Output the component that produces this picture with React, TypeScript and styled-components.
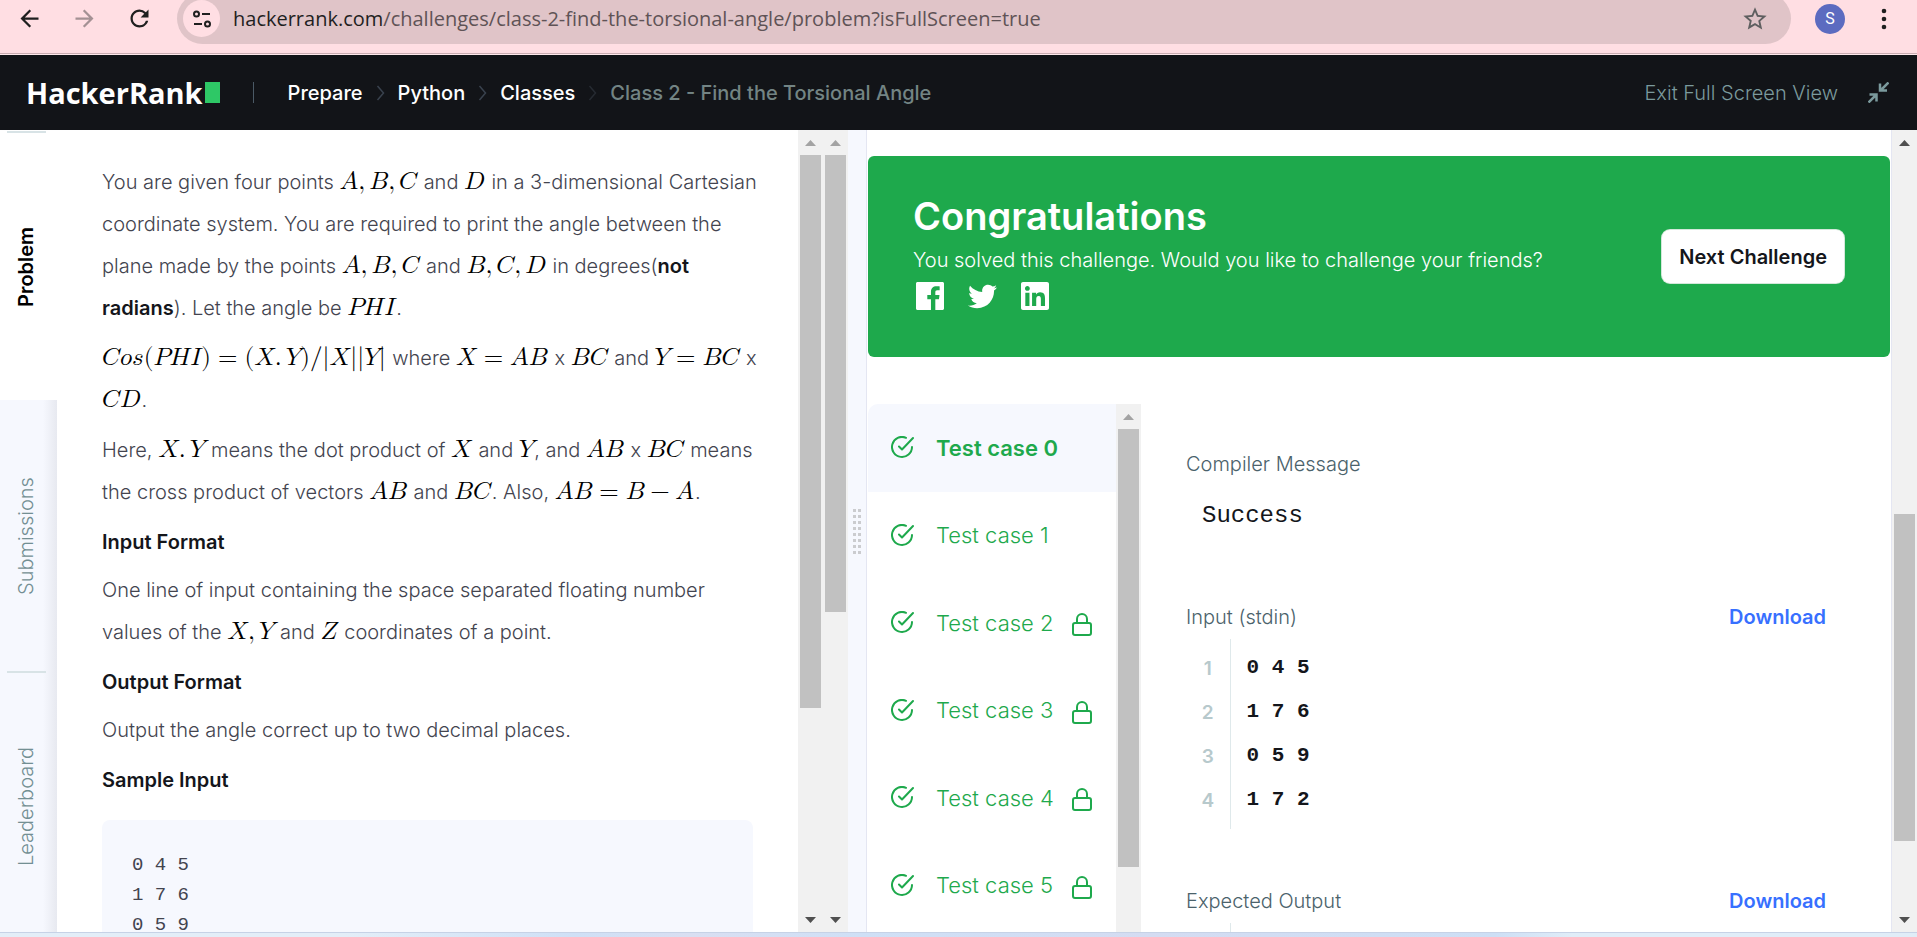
import React from "react";
import styled, { createGlobalStyle } from "styled-components";
import { MdArrowBack, MdArrowForward, MdRefresh, MdStarBorder } from "react-icons/md";
import { FaTwitter, FaLinkedin } from "react-icons/fa";

const sans = `Inter, "Liberation Sans", sans-serif`;
const mono = `"Liberation Mono", monospace`;
const ink = "#14161b";
const bodyText = "#43444f";
const green = "#1ea94c";
const pale = "#f6f8fe";

const GlobalStyle = createGlobalStyle`
  *, *::before, *::after { box-sizing: border-box; }
  body { margin: 0; background: #fff; font-family: ${sans}; font-size: 20px; }
  h1, h2, h3, p, pre, ul { margin: 0; padding: 0; }
  ul { list-style: none; }
  button { border: 0; padding: 0; background: none; font: inherit; color: inherit; cursor: pointer; }
  a { color: inherit; text-decoration: none; }
  svg { display: block; flex: none; }
`;

const Page = styled.div`
  display: flex;
  flex-direction: column;
  height: 100vh;
  overflow: hidden;
`;

/* Browser toolbar */
const BrowserBar = styled.div`
  display: flex;
  align-items: center;
  flex: none;
  height: 55px;
  padding: 0 20px 17px 16px;
  background: #ffdee3;
  border-bottom: 1px solid #ffe9ec;
  box-shadow: inset 0 -1px 0 #c9adb2;
  color: #1f1f1f;
`;

const ToolButton = styled.button<{ $faded?: boolean }>`
  display: flex;
  align-items: center;
  justify-content: center;
  width: 27px;
  height: 27px;
  margin-right: 28px;
  opacity: ${(p) => (p.$faded ? 0.4 : 1)};
`;

const AddressPill = styled.div`
  display: flex;
  align-items: center;
  flex: 1;
  min-width: 0;
  height: 51px;
  margin: 0 24px 0 -4px;
  padding: 0 22px 0 6px;
  border-radius: 26px;
  background: #e0c4c8;
`;

const SiteInfo = styled.button`
  display: flex;
  align-items: center;
  justify-content: center;
  flex: none;
  width: 37px;
  height: 37px;
  border-radius: 50%;
  background: #ffdee3;
`;

const Address = styled.div`
  flex: 1;
  min-width: 0;
  margin-left: 13px;
  overflow: hidden;
  white-space: nowrap;
  font: 400 20px/30px "Open Sans", sans-serif;
  color: #5f5356;
`;

const Host = styled.span`
  color: #1f1f1f;
`;

const StarButton = styled.button`
  color: #5f5f60;
`;

const Avatar = styled.button`
  display: flex;
  align-items: center;
  justify-content: center;
  width: 30px;
  height: 30px;
  border-radius: 50%;
  background: #5c6bc0;
  color: #fff;
  font: 400 16px/20px Roboto, sans-serif;
`;

const MenuButton = styled.button`
  width: 26px;
  height: 26px;
  margin-left: 26px;
`;

/* Site header */
const Header = styled.header`
  display: flex;
  align-items: center;
  flex: none;
  height: 75px;
  padding: 0 28px 0 26px;
  background: #121418;
`;

const Logo = styled.a`
  display: flex;
  align-items: center;
  gap: 2px;
  color: #fff;
  font: 700 29px/40px "Open Sans", sans-serif;

  &::after {
    content: "";
    width: 15px;
    height: 21px;
    background: #2ec866;
  }
`;

const Divider = styled.span`
  width: 1px;
  height: 21px;
  margin: 0 34px 0 33px;
  background: #4b5a66;
`;

const Crumbs = styled.nav`
  display: flex;
  align-items: center;
  gap: 13px;
  flex: 1;
  font-weight: 500;
  line-height: 30px;
  color: #fff;
  white-space: nowrap;

  svg { color: #39424e; }
  svg:last-of-type { color: #262b32; }
`;

const Current = styled.span`
  color: #738484;
`;

const ExitButton = styled.button`
  display: flex;
  align-items: center;
  gap: 30px;
  font-weight: 300;
  line-height: 30px;
  color: #7b9a9d;
  white-space: nowrap;
`;

/* Work area */
const Workspace = styled.main`
  display: grid;
  grid-template-columns: minmax(0, 848fr) 19px minmax(0, 1050fr);
  flex: 1;
  min-height: 0;
`;

const ProblemPane = styled.section`
  display: flex;
  min-width: 0;
  min-height: 0;
  overflow: hidden;
`;

const Rail = styled.div`
  display: flex;
  flex-direction: column;
  flex: none;
  width: 57px;
  overflow: hidden;
  background: ${pale};
`;

const RailTab = styled.button<{ $active?: boolean; $ruled?: boolean }>`
  display: flex;
  flex: none;
  flex-direction: column;
  align-items: center;
  height: 270px;
  padding-right: 5px;
  background: ${(p) =>
    p.$active ? "#fff" : `linear-gradient(to left, #e7e9f0, ${pale} 14px)`};
  color: ${(p) => (p.$active ? "#000" : "#738f93")};
  font-weight: ${(p) => (p.$active ? 600 : 300)};

  &::before {
    content: "";
    width: 39px;
    height: 2px;
    margin-top: 1px;
    background: ${(p) => (p.$ruled ? "#d8e3e6" : "transparent")};
  }
`;

const RailLabel = styled.span`
  display: flex;
  align-items: center;
  justify-content: center;
  flex: 1;
  writing-mode: vertical-rl;
  transform: rotate(180deg);
  line-height: 30px;
`;

const Statement = styled.article`
  flex: 1;
  min-width: 0;
  padding: 31px 39px 0 45px;
  overflow: hidden;
  font-weight: 300;
  line-height: 42px;
  color: ${bodyText};
`;

const Paragraph = styled.p`
  margin-bottom: 8px;

  strong { font-weight: 600; color: ${ink}; }
`;

const Heading = styled.h3`
  margin-bottom: 6px;
  font-size: 20px;
  font-weight: 600;
  line-height: 42px;
  color: ${ink};
`;

const Formula = styled("math")`
  margin-right: 1px;
  font-family: "Latin Modern Math", math, "Liberation Serif", serif;
  font-size: 25px;
  line-height: 24px;
  color: #000;
`;

const Sample = styled.pre`
  margin: 19px 6px 0 0;
  padding: 30px 30px 60px;
  border-radius: 8px;
  background: ${pale};
  color: ${bodyText};
  font: 400 19px/30px ${mono};
`;

/* Scrollbars drawn as part of the panes */
const Track = styled.div`
  display: flex;
  flex-direction: column;
  flex: none;
  width: 25px;
  background: #f1f1f1;
`;

const TrackSpace = styled.span<{ $grow: number }>`
  flex: ${(p) => p.$grow} 0 0;
`;

const Thumb = styled.span<{ $grow: number }>`
  flex: ${(p) => p.$grow} 0 0;
  margin: 0 2px;
  background: #c1c1c1;
`;

const TrackArrow = styled.span<{ $dim?: boolean }>`
  display: flex;
  align-items: center;
  justify-content: center;
  flex: none;
  height: 25px;
  padding-right: 1px;
  color: ${(p) => (p.$dim ? "#a3a3a3" : "#505050")};
`;

const Splitter = styled.div`
  display: flex;
  align-items: center;
  justify-content: center;
  background: ${pale};
  border-right: 1px solid #e4e6f2;
`;

const ResultPane = styled.section`
  display: flex;
  min-width: 0;
  min-height: 0;
  overflow: hidden;
`;

const ResultBody = styled.div`
  display: flex;
  flex-direction: column;
  flex: 1;
  min-width: 0;
  padding: 26px 1px 0;
  border-right: 1px solid #e4e6f2;
  overflow: hidden;
`;

const Banner = styled.div`
  display: flex;
  align-items: center;
  justify-content: space-between;
  flex: none;
  padding: 35px 46px 47px 45px;
  border-radius: 6px;
  background: ${green};
  color: #fff;
`;

const BannerTitle = styled.h2`
  font-size: 38px;
  font-weight: 600;
  line-height: 50px;
`;

const BannerText = styled.p`
  margin-top: 2px;
  font-weight: 300;
  line-height: 34px;
`;

const Socials = styled.div`
  display: flex;
  align-items: center;
  gap: 24px;
  height: 28px;
  margin: 5px 0 0 3px;
`;

const LinkedinIcon = styled(FaLinkedin)`
  width: 28px;
  height: 32px;
`;

const NextButton = styled.button`
  flex: none;
  height: 53px;
  padding: 0 17px;
  margin-top: 12px;
  border-radius: 8px;
  background: #fff;
  color: ${ink};
  font-weight: 600;
  box-shadow: 0 0 0 1px #d3e8da;
`;

const Results = styled.div`
  display: flex;
  flex: 1;
  min-height: 0;
  margin-top: 47px;
`;

const CaseList = styled.ul`
  display: grid;
  grid-auto-rows: 1fr;
  flex: none;
  width: 248px;
  height: 525px;
  border-top-left-radius: 10px;
  overflow: hidden;
`;

const CaseItem = styled.button<{ $active?: boolean }>`
  display: flex;
  align-items: center;
  width: 100%;
  height: 100%;
  padding: 0 24px 0 23px;
  background: ${(p) => (p.$active ? pale : "#fff")};
  color: ${green};
  font-size: 22px;
  font-weight: ${(p) => (p.$active ? 600 : 300)};
  line-height: 30px;
`;

const CaseName = styled.span`
  flex: 1;
  margin-left: 22px;
  text-align: left;
`;

const LockIcon = styled.svg`
  margin-top: 4px;
`;

const Output = styled.div`
  flex: 1;
  min-width: 0;
  padding: 45px 64px 0 45px;
  overflow: hidden;
`;

const OutputHead = styled.div`
  display: flex;
  justify-content: space-between;
  line-height: 30px;
`;

const OutputLabel = styled.h3`
  font-size: 20px;
  font-weight: 300;
  color: #4b626b;
`;

const Download = styled.a`
  font-weight: 600;
  color: #3770ff;
`;

const Message = styled.pre`
  margin: 22px 0 71px 16px;
  color: ${ink};
  font: 400 24px/30px ${mono};
`;

const Lines = styled.table`
  margin: 7px 0 57px;
  border-collapse: collapse;
  font-weight: 700;

  td { padding: 0; height: 44px; }
  tr:first-child td { height: 51px; padding-top: 7px; }
  tr:last-child td { height: 51px; padding-bottom: 7px; }
`;

const LineNumber = styled.td`
  width: 44px;
  border-right: 1px solid #dfe9eb;
  text-align: center;
  font-size: 19px;
  font-weight: 600;
  color: #b7c9cc;
`;

const LineText = styled.td`
  color: ${ink};
  font: 700 21px/30px ${mono};
  white-space: pre;

  && { padding-left: 16px; }
`;

const BottomEdge = styled.div`
  flex: none;
  height: 5px;
  border-top: 1px solid #c6d2e6;
  background: linear-gradient(to right, #e3eef8 0 18%, #cfe0f6 30%, #d9dff2 36%, #cfe0f6 45%, #d4dcf2 60%, #cddff5 78%, #e0edf8 82%);
`;

const ArrowShape = ({ down }: { down?: boolean }) => (
  <svg width="11" height="6" viewBox="0 0 11 6" fill="currentColor">
    <path d={down ? "M0 0h11L5.500 6z" : "M0 6h11L5.500 0z"} />
  </svg>
);

interface ScrollbarProps {
  before?: number;
  thumb: number;
  after: number;
  dim?: boolean;
  end?: boolean;
}

const Scrollbar = ({ before = 0, thumb, after, dim, end = true }: ScrollbarProps) => (
  <Track aria-hidden="true">
    <TrackArrow $dim={dim}><ArrowShape /></TrackArrow>
    {before > 0 && <TrackSpace $grow={before} />}
    <Thumb $grow={thumb} />
    <TrackSpace $grow={after} />
    {end && <TrackArrow><ArrowShape down /></TrackArrow>}
  </Track>
);

const Chevron = () => (
  <svg width="9" height="16" viewBox="0 0 9 16" fill="none" stroke="currentColor" strokeWidth="1.500">
    <path d="M1.500 1L7.500 8L1.500 15" />
  </svg>
);

const CheckCircle = () => (
  <svg width="23" height="23" viewBox="0 0 23 23" fill="none" stroke="currentColor" strokeWidth="2" strokeLinecap="round" strokeLinejoin="round">
    <path d="M21 11a10 10 0 1 1-6-9.200" />
    <path d="M22 2L11 13.500L8 10.500" />
  </svg>
);

const Lock = () => (
  <LockIcon width="20" height="23" viewBox="0 0 20 23" fill="none" stroke="currentColor" strokeWidth="2">
    <rect x="1" y="10" width="18" height="12" rx="2" />
    <path d="M5 10V6a5 5 0 0 1 10 0v4" />
  </LockIcon>
);

const Facebook = () => (
  <svg width="28" height="28" viewBox="0 0 24 24" fill="currentColor">
    <path d="M22.676 0H1.324C.593 0 0 .593 0 1.324v21.352C0 23.408.593 24 1.324 24h11.494v-9.294H9.689v-3.621h3.129V8.410c0-3.099 1.894-4.785 4.659-4.785 1.325 0 2.464.097 2.796.141v3.240h-1.921c-1.500 0-1.792.721-1.792 1.771v2.311h3.584l-.465 3.630H16.560V24h6.115c.733 0 1.325-.592 1.325-1.324V1.324C24 .593 23.408 0 22.676 0" />
  </svg>
);

/* Letters become identifiers, every other mark an operator. */
const Tex = ({ children }: { children: string }) => (
  <Formula>
    {children.split("").map((ch, i) => {
      if (/[A-Za-z]/.test(ch)) return <mi key={i}>{ch}</mi>;
      if (ch === "," || ch === ".")
        return <mo key={i} lspace="0px" rspace="4px">{ch}</mo>;
      if (/[()|/]/.test(ch))
        return <mo key={i} stretchy="false" lspace="0px" rspace="0px">{ch}</mo>;
      return <mo key={i}>{ch}</mo>;
    })}
  </Formula>
);

const stdin = ["0 4 5", "1 7 6", "0 5 9", "1 7 2"];
const cases = [0, 1, 2, 3, 4, 5];

export default function App() {
  return (
    <Page>
      <GlobalStyle />
      <BrowserBar>
        <ToolButton aria-label="Back"><MdArrowBack size={27} /></ToolButton>
        <ToolButton aria-label="Forward" $faded><MdArrowForward size={27} /></ToolButton>
        <ToolButton aria-label="Reload"><MdRefresh size={27} /></ToolButton>
        <AddressPill>
          <SiteInfo aria-label="Site information">
            <svg width="18" height="18" viewBox="0 0 18 18" fill="none" stroke="currentColor" strokeWidth="2">
              <circle cx="3.500" cy="4" r="2.500" />
              <path d="M9 4H17M1 14H9" />
              <circle cx="14.500" cy="14" r="2.500" />
            </svg>
          </SiteInfo>
          <Address>
            <Host>hackerrank.com</Host>/challenges/class-2-find-the-torsional-angle/problem?isFullScreen=true
          </Address>
          <StarButton aria-label="Bookmark"><MdStarBorder size={28} /></StarButton>
        </AddressPill>
        <Avatar>S</Avatar>
        <MenuButton aria-label="Menu">
          <svg width="26" height="26" viewBox="0 0 26 26" fill="currentColor">
            <circle cx="13" cy="5" r="2.300" />
            <circle cx="13" cy="13" r="2.300" />
            <circle cx="13" cy="21" r="2.300" />
          </svg>
        </MenuButton>
      </BrowserBar>

      <Header>
        <Logo href="#">HackerRank</Logo>
        <Divider />
        <Crumbs aria-label="Breadcrumb">
          <a href="#">Prepare</a>
          <Chevron />
          <a href="#">Python</a>
          <Chevron />
          <a href="#">Classes</a>
          <Chevron />
          <Current>Class 2 - Find the Torsional Angle</Current>
        </Crumbs>
        <ExitButton>
          Exit Full Screen View
          <svg width="21" height="21" viewBox="0 0 21 21" fill="none" stroke="currentColor" strokeWidth="2.500">
            <path d="M20.500 0.500L13 8M12 1.500V8.500H19" />
            <path d="M0.500 20.500L8 13M1.500 12.500H8.500V19.500" />
          </svg>
        </ExitButton>
      </Header>

      <Workspace>
        <ProblemPane>
          <Rail>
            <RailTab $active $ruled><RailLabel>Problem</RailLabel></RailTab>
            <RailTab><RailLabel>Submissions</RailLabel></RailTab>
            <RailTab $ruled><RailLabel>Leaderboard</RailLabel></RailTab>
          </Rail>
          <Statement>
            <Paragraph>
              You are given four points <Tex>A,B,C</Tex> and <Tex>D</Tex> in a 3-dimensional Cartesian
              coordinate system. You are required to print the angle between the plane made by the
              points <Tex>A,B,C</Tex> and <Tex>B,C,D</Tex> in degrees(<strong>not radians</strong>). Let
              the angle be <Tex>PHI</Tex>.
            </Paragraph>
            <Paragraph>
              <Tex>Cos(PHI)=(X.Y)/|X||Y|</Tex> where <Tex>X=AB</Tex> x <Tex>BC</Tex> and <Tex>Y=BC</Tex> x{" "}
              <Tex>CD</Tex>.
            </Paragraph>
            <Paragraph>
              Here, <Tex>X.Y</Tex> means the dot product of <Tex>X</Tex> and <Tex>Y</Tex>, and{" "}
              <Tex>AB</Tex> x <Tex>BC</Tex> means the cross product of vectors <Tex>AB</Tex> and{" "}
              <Tex>BC</Tex>. Also, <Tex>AB=B−A</Tex>.
            </Paragraph>
            <Heading>Input Format</Heading>
            <Paragraph>
              One line of input containing the space separated floating number values of
              the <Tex>X,Y</Tex> and <Tex>Z</Tex> coordinates of a point.
            </Paragraph>
            <Heading>Output Format</Heading>
            <Paragraph>Output the angle correct up to two decimal places.</Paragraph>
            <Heading>Sample Input</Heading>
            <Sample>{stdin.slice(0, 3).join("\n")}</Sample>
          </Statement>
          <Scrollbar dim thumb={553} after={199} />
          <Scrollbar dim thumb={457} after={295} />
        </ProblemPane>

        <Splitter>
          <svg width="8" height="45" viewBox="0 0 8 45" fill="#cbcccf">
            {cases.concat(6, 7).map((n) => (
              <React.Fragment key={n}>
                <rect x="0" y={n * 6} width="3" height="3" />
                <rect x="5" y={n * 6} width="3" height="3" />
              </React.Fragment>
            ))}
          </svg>
        </Splitter>

        <ResultPane>
          <ResultBody>
            <Banner>
              <div>
                <BannerTitle>Congratulations</BannerTitle>
                <BannerText>You solved this challenge. Would you like to challenge your friends?</BannerText>
                <Socials>
                  <a href="#" aria-label="Facebook"><Facebook /></a>
                  <a href="#" aria-label="Twitter"><FaTwitter size={29} /></a>
                  <a href="#" aria-label="LinkedIn"><LinkedinIcon /></a>
                </Socials>
              </div>
              <NextButton>Next Challenge</NextButton>
            </Banner>
            <Results>
              <CaseList>
                {cases.map((n) => (
                  <li key={n}>
                    <CaseItem $active={n === 0}>
                      <CheckCircle />
                      <CaseName>Test case {n}</CaseName>
                      {n > 1 && <Lock />}
                    </CaseItem>
                  </li>
                ))}
              </CaseList>
              <Scrollbar dim thumb={438} after={65} end={false} />
              <Output>
                <OutputHead><OutputLabel>Compiler Message</OutputLabel></OutputHead>
                <Message>Success</Message>
                <OutputHead>
                  <OutputLabel>Input (stdin)</OutputLabel>
                  <Download href="#">Download</Download>
                </OutputHead>
                <Lines>
                  <tbody>
                    {stdin.map((line, i) => (
                      <tr key={line}>
                        <LineNumber>{i + 1}</LineNumber>
                        <LineText>{line}</LineText>
                      </tr>
                    ))}
                  </tbody>
                </Lines>
                <OutputHead>
                  <OutputLabel>Expected Output</OutputLabel>
                  <Download href="#">Download</Download>
                </OutputHead>
                <Lines>
                  <tbody>
                    <tr><LineNumber /><LineText /></tr>
                  </tbody>
                </Lines>
              </Output>
            </Results>
          </ResultBody>
          <Scrollbar before={359} thumb={327} after={66} />
        </ResultPane>
      </Workspace>
      <BottomEdge />
    </Page>
  );
}
